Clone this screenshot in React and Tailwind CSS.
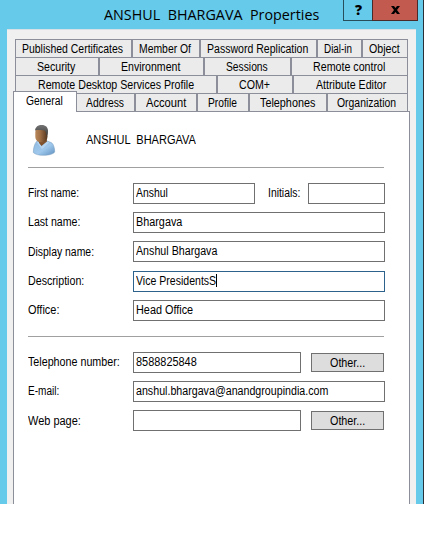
import { useLayoutEffect, useRef, useState } from "react";

// Single line of text, condensed or stretched to an exact width.
function Fit({ w, children }) {
  const ref = useRef(null);
  const [scale, setScale] = useState(1);
  useLayoutEffect(() => {
    setScale(w / ref.current.offsetWidth);
  }, [w, children]);
  return (
    <span className="inline-block shrink-0 text-left" style={{ width: w }}>
      <span
        ref={ref}
        className="inline-block origin-left whitespace-pre"
        style={{ transform: `scaleX(${scale})` }}
      >
        {children}
      </span>
    </span>
  );
}

// Each tab: [label, tab width, text width, offset of the text from the tab's left edge]
const tabRows = [
  [
    ["Published Certificates", 117, 101, 6],
    ["Member Of", 68, 52, 6],
    ["Password Replication", 117, 101, 6],
    ["Dial-in", 45, 28, 6],
    ["Object", 45, 31, 6],
  ],
  [
    ["Security", 84, 38, 21],
    ["Environment", 105, 59, 21],
    ["Sessions", 87, 42, 21],
    ["Remote control", 116, 72, 21],
  ],
  [
    ["Remote Desktop Services Profile", 202, 156, 22],
    ["COM+", 76, 31, 21],
    ["Attribute Editor", 114, 70, 22],
  ],
];

const frontTabs = [
  ["Address", 59, 38, 9],
  ["Account", 62, 40, 10],
  ["Profile", 52, 29, 10],
  ["Telephones", 78, 55, 10],
  ["Organization", 80, 59, 9],
];

function Tab({ tab: [label, width, textWidth, pad] }) {
  return (
    <div
      className="h-[18px] shrink-0 border-t border-r-2 border-[#8c8e99] bg-[#ebebeb] leading-[18px] last:border-r"
      style={{ width, paddingLeft: pad }}
    >
      <Fit w={textWidth}>{label}</Fit>
    </div>
  );
}

function Field({ label, labelWidth, value, valueWidth, width = "w-[252px]", focus, low, children }) {
  return (
    <div className="flex h-[21px]">
      <div className={`w-[105px] shrink-0 ${low ? "leading-[22px]" : "leading-5"}`}>
        <Fit w={labelWidth}>{label}</Fit>
      </div>
      <div
        className={`flex h-[21px] shrink-0 items-start border pl-[2px] leading-[18px] ${width} ${
          focus ? "border-[#2d628c]" : "border-[#707070]"
        }`}
      >
        {value && <Fit w={valueWidth}>{value}</Fit>}
        {focus && <span className="mt-[2px] h-[13px] w-px bg-black" />}
      </div>
      {children}
    </div>
  );
}

function OtherButton() {
  return (
    <button className="mt-px ml-[10px] h-[19px] w-[73px] border border-[#707070] bg-[#dddddd] leading-[18px]">
      <Fit w={35}>Other...</Fit>
    </button>
  );
}

function UserIcon() {
  return (
    <svg width="26" height="34" viewBox="0 0 26 34" className="shrink-0">
      <defs>
        <linearGradient id="skin" x1="0" x2="1">
          <stop offset="0" stopColor="#b8875a" />
          <stop offset=".4" stopColor="#a06f45" />
          <stop offset="1" stopColor="#54361f" />
        </linearGradient>
        <linearGradient id="shirt" x1="0" x2="1" y2="1">
          <stop offset="0" stopColor="#8fb9df" />
          <stop offset=".55" stopColor="#9fc8ec" />
          <stop offset="1" stopColor="#5f90c0" />
        </linearGradient>
        <linearGradient id="hair" y2="1" x2="0">
          <stop offset="0" stopColor="#747474" />
          <stop offset="1" stopColor="#3a3a3a" />
        </linearGradient>
      </defs>
      <path
        d="M5.500 17.500C3.500 20 2.300 24 2.300 28.500c2 2 6 3 11 2.800 5-.2 9-1.300 10.400-3.300 0-4-1.200-7.500-3-9.200L15 16.500Z"
        fill="url(#shirt)"
        stroke="#7399bd"
        strokeWidth=".5"
      />
      <path d="M8 16.500v3l2.500 2.500 5.500-4.500-.5-4.500Z" fill="#80532f" />
      <path d="M5.500 17.800l2.300.7 2.700 4 5.800-5 2 .8-7.300 7Z" fill="#b7d5f0" />
      <rect x="4.300" y="2.500" width="12.200" height="15.800" rx="5.500" fill="url(#skin)" />
      <path d="M4 6.500C4.500 2.800 7 1 10.800 1c3.900 0 6.200 2.300 6.200 5.800 0 2.300-.5 4-1.300 5.400-.5-1.700-.6-3.600-1-4.700-.5-1-1.300-1.300-2.700-1.300C9 6.200 6.500 5.500 4 6.500Z" fill="url(#hair)" />
    </svg>
  );
}

export default function App() {
  return (
    <div className="h-[560px] w-[425px] overflow-hidden bg-white font-['Liberation_Sans',Arial,sans-serif] text-[12px] text-black">
      <div className="flex h-[504px] w-[424px] flex-col border-r border-[#2b3036] bg-[#66caea]">
        <header className="flex h-[29px] shrink-0 items-start">
          <h1 className="ml-[104px] w-[239px] pt-[2px] font-['Open_Sans',sans-serif] text-[15px] leading-6">
            <Fit w={215}>{"ANSHUL  BHARGAVA  Properties"}</Fit>
          </h1>
          <button className="h-[21px] w-[29px] border-b border-l border-[#294e5b] pl-px font-['Open_Sans',sans-serif] text-[14px] leading-5 font-extrabold">
            ?
          </button>
          <button className="flex h-[21px] w-[46px] items-center justify-center border-r border-b border-l border-[#4a2b29] bg-[#c35a50]">
            <svg width="9" height="8" viewBox="0 0 9 8">
              <path d="M0 0h3l1.500 2L6 0h3L6 4l3 4H6L4.500 6 3 8H0l3-4Z" />
            </svg>
          </button>
        </header>

        <main className="mx-[7px] flex min-h-0 flex-1 flex-col border-t border-[#d5e0e4] bg-[#f0f0f0] px-[6px] pt-[9px]">
          <div className="ml-[2px] w-[393px] shrink-0">
            {tabRows.map((row) => (
              <div key={row[0][0]} className="flex border-l border-[#8c8e99]">
                {row.map((tab) => (
                  <Tab key={tab[0]} tab={tab} />
                ))}
              </div>
            ))}
          </div>
          <div className="-mt-[2px] flex h-5 shrink-0 items-end">
            <div className="z-10 -mb-px h-[21px] w-16 shrink-0 border-t border-r border-l border-[#8c8e99] bg-white pl-3 leading-[19px]">
              <Fit w={37}>General</Fit>
            </div>
            {frontTabs.map((tab) => (
              <Tab key={tab[0]} tab={tab} />
            ))}
          </div>

          <section className="min-h-0 w-[397px] flex-1 border-t border-r border-l border-[#8c8e99] bg-white pl-[14px]">
            <div className="flex h-14 w-[356px] border-b border-[#a0a0a0] pt-[12px] pl-[3px]">
              <UserIcon />
              <div className="ml-[29px] pt-[7px] leading-[18px]">
                <Fit w={110}>{"ANSHUL  BHARGAVA"}</Fit>
              </div>
            </div>

            <div className="mt-[15px] flex h-[154px] w-[356px] flex-col border-b border-[#a0a0a0]">
              <Field label="First name:" labelWidth={51} value="Anshul" valueWidth={32} width="w-[122px]">
                <div className="ml-[13px] w-[40px] shrink-0 leading-5">
                  <Fit w={32}>Initials:</Fit>
                </div>
                <div className="h-[21px] w-[77px] shrink-0 border border-[#707070]" />
              </Field>
              <div className="h-2" />
              <Field label="Last name:" labelWidth={52} value="Bhargava" valueWidth={46} />
              <div className="h-2" />
              <Field low label="Display name:" labelWidth={66} value="Anshul Bhargava" valueWidth={81} />
              <div className="h-[9px]" />
              <Field focus label="Description:" labelWidth={56} value="Vice PresidentsS" valueWidth={80} />
              <div className="h-2" />
              <Field label="Office:" labelWidth={31} value="Head Office" valueWidth={57} />
            </div>

            <div className="mt-[15px] flex flex-col gap-2">
              <Field label="Telephone number:" labelWidth={92} value="8588825848" valueWidth={61} width="w-[168px]">
                <OtherButton />
              </Field>
              <Field label="E-mail:" labelWidth={31} value="anshul.bhargava@anandgroupindia.com" valueWidth={192} />
              <Field low label="Web page:" labelWidth={53} width="w-[168px]">
                <OtherButton />
              </Field>
            </div>
          </section>
        </main>
      </div>
    </div>
  );
}
